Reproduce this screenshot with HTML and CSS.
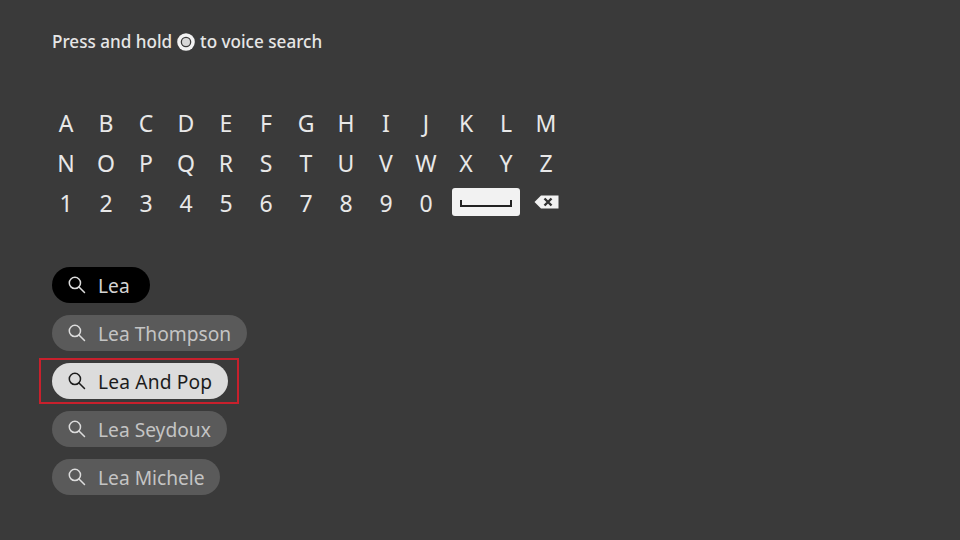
FILE: index.html
```html
<!DOCTYPE html>
<html lang="en">
<head>
<meta charset="utf-8">
<title>Voice search</title>
<link rel="stylesheet" href="styles.css">
</head>
<body>
<main class="page">
  <p class="hint"><span>Press and hold</span><svg class="mic" viewBox="0 0 18 18" width="18" height="18" aria-hidden="true"><circle cx="9" cy="9" r="8.8" fill="#f2f2f2"/><circle cx="9" cy="9" r="5.3" fill="#3a3a3a"/><circle cx="9" cy="9" r="4" fill="#d8d8d8"/></svg><span class="hint-end">to voice search</span></p>
  <div class="keys">
    <span>A</span><span>B</span><span>C</span><span>D</span><span>E</span><span>F</span><span>G</span><span>H</span><span>I</span><span>J</span><span>K</span><span>L</span><span>M</span>
    <span>N</span><span>O</span><span>P</span><span>Q</span><span>R</span><span>S</span><span>T</span><span>U</span><span>V</span><span>W</span><span>X</span><span>Y</span><span>Z</span>
    <span>1</span><span>2</span><span>3</span><span>4</span><span>5</span><span>6</span><span>7</span><span>8</span><span>9</span><span>0</span>
    <span class="space"><svg viewBox="0 0 52 10" width="52" height="10" aria-hidden="true"><path d="M1 2v6h50V2" fill="none" stroke="#222" stroke-width="2"/></svg></span>
    <span class="back"><svg viewBox="0 0 25 14" width="25" height="14" aria-hidden="true"><path d="M0.5 7 7 .5h17.5v13H7z" fill="#f2f2f2"/><path d="M10.5 3.5l7 7m0-7l-7 7" stroke="#333" stroke-width="2.4" fill="none"/></svg></span>
  </div>
  <ul class="results">
    <li class="pill typed"><svg class="glass" viewBox="0 0 18 18" width="18" height="18" aria-hidden="true"><use href="#g"/></svg>Lea</li>
    <li class="pill"><svg class="glass" viewBox="0 0 18 18" width="18" height="18" aria-hidden="true"><use href="#g"/></svg>Lea Thompson</li>
    <li class="pill active"><svg class="glass" viewBox="0 0 18 18" width="18" height="18" aria-hidden="true"><use href="#g"/></svg>Lea And Pop</li>
    <li class="pill"><svg class="glass" viewBox="0 0 18 18" width="18" height="18" aria-hidden="true"><use href="#g"/></svg>Lea Seydoux</li>
    <li class="pill tight"><svg class="glass" viewBox="0 0 18 18" width="18" height="18" aria-hidden="true"><use href="#g"/></svg>Lea Michele</li>
  </ul>
</main>
<svg class="defs" width="0" height="0" aria-hidden="true"><defs><g id="g" fill="none" stroke="currentColor" stroke-width="1.5"><circle cx="6.9" cy="6.9" r="5.6"/><path d="M11 11l5.5 5.5" stroke-linecap="round"/></g></defs></svg>
</body>
</html>
```
FILE: styles.css
```css
* { box-sizing: border-box; }
html, body { margin: 0; height: 100%; }
body { background: #3a3a3a; font-family: "Noto Sans", "Open Sans", sans-serif; overflow: hidden; }
.page { width: 960px; height: 540px; padding: 30px 0 0 52px; }
.hint { margin: 0 0 48px; height: 24px; display: flex; align-items: center; gap: 5px; font-size: 17.1px; font-weight: 500; color: #e6e6e6; white-space: nowrap; line-height: 24px; }
.mic { flex: none; }
.keys { margin: 0 0 0 -6px; display: grid; grid-template-columns: repeat(13, 40px); grid-auto-rows: 40px; width: 520px; font-size: 23px; color: #e8e8e8; }
.keys span { display: flex; align-items: center; justify-content: center; padding-top: 1px; }
.keys .space { grid-column: span 2; margin: 6px 6px 6px; background: #f2f2f2; border-radius: 3px; padding-top: 2px; }
.keys .back { padding-top: 0; }
.results { list-style: none; margin: 45px 0 0; padding: 0; display: flex; flex-direction: column; gap: 12px; align-items: flex-start; }
.pill { position: relative; height: 36px; border-radius: 18px; padding: 0 16px; display: flex; align-items: center; gap: 12px; font-size: 19.2px; background: #5a5a5a; color: #c4c4c4; white-space: nowrap; }
.glass { flex: none; width: 18px; height: 18px; color: #dcdcdc; }
.typed { background: #000; color: #d4d4d4; padding-right: 20px; }
.tight { padding-right: 15px; }
.active { background: #dcdcdc; color: #1c1c1c; letter-spacing: 0.15px; }
.active .glass { color: #1c1c1c; }
.active::after { content: ""; position: absolute; inset: -5px -11px -5px -13px; border: 2px solid #c8202c; }
.defs { position: absolute; }
```
